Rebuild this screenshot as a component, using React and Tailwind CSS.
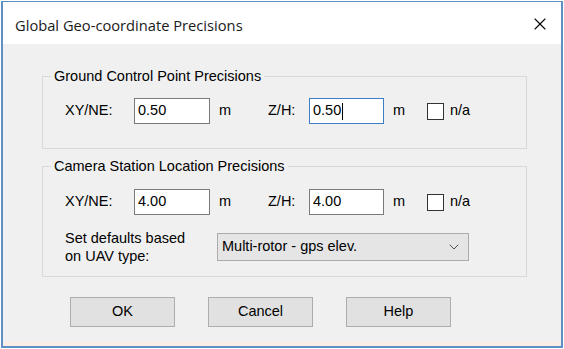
import { ChevronDown, X } from "lucide-react"

function Field({ value, focused }) {
    return (
        <div
            className={
                "h-[26px] flex items-center px-[3px] bg-white border " +
                (focused ? "border-[#3c7fc8]" : "border-[#7a7a7a]")
            }
        >
            <span>{value}</span>
            {focused && <span className="w-px h-[17px] bg-black ml-px" />}
        </div>
    )
}

function PrecisionRow({ xy, zh, focused }) {
    return (
        <div className="flex items-center">
            <span className="w-[69px]">XY/NE:</span>
            <div className="w-[76px]"><Field value={xy} /></div>
            <span className="ml-[9px] w-[49px]">m</span>
            <span className="w-[41px]">Z/H:</span>
            <div className="w-[75px]"><Field value={zh} focused={focused} /></div>
            <span className="ml-[9px] w-[34px]">m</span>
            <span className="w-[17px] h-[17px] border border-[#333] bg-white" />
            <span className="ml-[6px]">n/a</span>
        </div>
    )
}

function Btn({ children }) {
    return (
        <button className="w-[105px] h-[30px] bg-[#e1e1e1] border border-[#adadad] text-black">
            {children}
        </button>
    )
}

export default function App() {
    return (
        <div
            className="w-[564px] h-[349px] bg-white pl-px pt-px"
            style={{ fontFamily: "'Liberation Sans', Arial, sans-serif" }}
        >
            <div className="w-[562px] h-[347px] border-l-2 border-r-2 border-t border-b-2 border-[#5f90c4] flex flex-col">
                <div className="h-[42px] bg-white flex items-center justify-between pl-[12px] pr-[11px] pt-[5px]">
                    <span className="text-[14.7px] text-[#1a1a1a]" style={{ fontFamily: "'Open Sans', 'Noto Sans', sans-serif" }}>
                        Global Geo-coordinate Precisions
                    </span>
                    <X size={20} strokeWidth={1.3} className="text-black -mt-[4px]" />
                </div>
                <div className="flex-1 bg-[#f0f0f0] text-[14.5px] text-black flex flex-col pl-[39px] pr-[34px] pt-[24px]">
                    <fieldset className="border border-[#d9d9d9] pl-[8px] pr-[8px] pt-[14px] pb-[24px]">
                        <legend className="px-[3px] leading-[16px]">Ground Control Point Precisions</legend>
                        <div className="pl-[14px]">
                            <PrecisionRow xy="0.50" zh="0.50" focused />
                        </div>
                    </fieldset>
                    <fieldset className="mt-[9px] border border-[#d9d9d9] pl-[8px] pr-[8px] pt-[15px] pb-[11px]">
                        <legend className="px-[3px] leading-[16px]">Camera Station Location Precisions</legend>
                        <div className="pl-[14px]">
                            <PrecisionRow xy="4.00" zh="4.00" />
                            <div className="flex items-center mt-[14px]">
                                <span className="w-[152px] leading-[18px]">Set defaults based<br />on UAV type:</span>
                                <div className="w-[252px] h-[28px] bg-[#e5e5e5] border border-[#acacac] flex items-center justify-between pl-[4px] pr-[6px]">
                                    <span>Multi-rotor - gps elev.</span>
                                    <ChevronDown size={16} strokeWidth={1.4} className="text-[#444]" />
                                </div>
                            </div>
                        </div>
                    </fieldset>
                    <div className="flex mt-[20px] pl-[28px] gap-[33px]">
                        <Btn>OK</Btn>
                        <Btn>Cancel</Btn>
                        <Btn>Help</Btn>
                    </div>
                    <div className="flex-1" />
                </div>
                <div className="h-[4px] bg-[#fbeee6]" />
            </div>
        </div>
    )
}
